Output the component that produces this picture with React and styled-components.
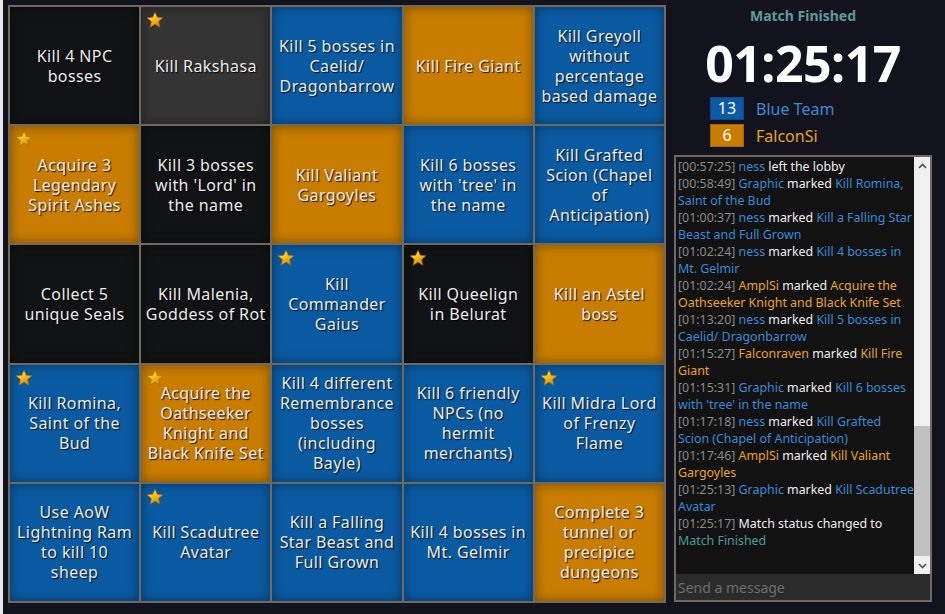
import React from "react";
import styled, { createGlobalStyle } from "styled-components";

const GlobalStyle = createGlobalStyle`
  html, body {
    margin: 0;
    padding: 0;
    background: #13131d;
  }
  body {
    border-left: 3px solid #e6e6ec;
    box-sizing: border-box;
    height: 614px;
    overflow: hidden;
    font-family: "Noto Sans", "Open Sans", sans-serif;
  }
`;

const Page = styled.div`
  display: flex;
  flex-direction: row;
  align-items: flex-start;
  gap: 8px;
  padding: 5px 0 0 5px;
`;

const Board = styled.div`
  display: grid;
  grid-template-columns: repeat(5, 1fr);
  grid-template-rows: repeat(5, 1fr);
  gap: 2px;
  width: 658px;
  height: 598px;
  box-sizing: border-box;
  border: 2px solid #6f695f;
  background: #6f695f;
`;

const colors = {
  black: "#101213",
  gray: "#343434",
  blue: "#0a5aa2",
  orange: "#c87d00",
};

const Cell = styled.div`
  position: relative;
  display: flex;
  align-items: center;
  justify-content: center;
  text-align: center;
  white-space: pre-line;
  padding: 0 4px;
  background: ${(p) => colors[p.$color]};
  box-shadow: inset 0 0 12px rgba(0, 0, 0, 0.4);
  color: #ececec;
  font-size: 16px;
  line-height: 20px;
  letter-spacing: 0.4px;
  text-shadow: 1px 1px 1px rgba(0, 0, 0, 0.9);
`;

const StarWrap = styled.div`
  position: absolute;
  top: 4px;
  left: 5px;
  width: 18px;
  height: 18px;
`;

const Star = () => (
  <StarWrap>
    <svg width="18" height="18" viewBox="0 0 24 24">
      <defs>
        <linearGradient id="sg" x1="0" y1="0" x2="0.6" y2="1">
          <stop offset="0" stopColor="#fff6b0" />
          <stop offset="0.45" stopColor="#ffc81e" />
          <stop offset="1" stopColor="#d98a00" />
        </linearGradient>
      </defs>
      <path
        d="M12 1.5l3.1 6.9 7.4.7-5.6 5 1.7 7.4L12 17.6l-6.6 3.9 1.7-7.4-5.6-5 7.4-.7z"
        fill="url(#sg)"
        stroke="#9a6200"
        strokeWidth="0.8"
        strokeLinejoin="round"
      />
    </svg>
  </StarWrap>
);

const Panel = styled.div`
  display: flex;
  flex-direction: column;
  width: 258px;
`;

const Status = styled.div`
  text-align: center;
  color: #5d9b9b;
  font-weight: bold;
  font-size: 14px;
  line-height: 20px;
  margin-top: 1px;
`;

const Timer = styled.div`
  text-align: center;
  color: #ffffff;
  font-weight: bold;
  font-size: 50px;
  line-height: 56px;
  margin-top: 9px;
  letter-spacing: -0.5px;
`;

const Teams = styled.div`
  display: flex;
  flex-direction: column;
  gap: 4px;
  padding-left: 36px;
  margin-top: 6px;
`;

const TeamRow = styled.div`
  display: flex;
  align-items: center;
  gap: 12px;
`;

const Score = styled.div`
  width: 34px;
  height: 23px;
  box-sizing: border-box;
  border: 1px solid ${(p) => (p.$team === "blue" ? "#0a4a88" : "#a56500")};
  background: ${(p) => (p.$team === "blue" ? "#0b5aa3" : "#c97d00")};
  color: #fff;
  font-size: 16px;
  line-height: 21px;
  text-align: center;
`;

const TeamName = styled.div`
  color: ${(p) => (p.$team === "blue" ? "#3a8ad6" : "#eba421")};
  font-size: 16px;
`;

const Chat = styled.div`
  margin-top: 8px;
  height: 447px;
  box-sizing: border-box;
  border: 2px solid #6f695f;
  display: flex;
  flex-direction: column;
  background: #121212;
`;

const LogArea = styled.div`
  flex: 1;
  display: flex;
  flex-direction: row;
  min-height: 0;
`;

const Log = styled.div`
  flex: 1;
  padding: 1px 0 0 2px;
  font-size: 12.4px;
  line-height: 17px;
  color: #f0f0f0;
`;

const Line = styled.div``;

const Time = styled.span`
  color: #8a8a8a;
`;

const Hl = styled.span`
  color: ${(p) =>
    p.$c === "blue" ? "#3a8ad6" : p.$c === "orange" ? "#eba421" : "#4a9d9d"};
`;

const Scrollbar = styled.div`
  width: 16px;
  background: #f0f0f0;
  display: flex;
  flex-direction: column;
  align-items: center;
`;

const Arrow = styled.div`
  height: 17px;
  display: flex;
  align-items: center;
  justify-content: center;
`;

const Track = styled.div`
  flex: 1;
  width: 100%;
  display: flex;
  flex-direction: column;
  justify-content: flex-end;
`;

const Thumb = styled.div`
  height: 130px;
  background: #c1c1c1;
  margin-bottom: 1px;
`;

const Input = styled.input`
  height: 26px;
  box-sizing: border-box;
  border: none;
  outline: none;
  background: #2b2b2b;
  color: #ddd;
  font-family: "Noto Sans", "Open Sans", sans-serif;
  font-size: 14px;
  padding: 0 2px;
  &::placeholder {
    color: #6e6e6e;
  }
`;

const cells = [
  ["Kill 4 NPC bosses", "black"],
  ["Kill Rakshasa", "gray", true],
  ["Kill 5 bosses in Caelid/ Dragonbarrow", "blue"],
  ["Kill Fire Giant", "orange"],
  ["Kill Greyoll without percentage based damage", "blue"],
  ["Acquire 3 Legendary Spirit Ashes", "orange", true],
  ["Kill 3 bosses with 'Lord' in the name", "black"],
  ["Kill Valiant Gargoyles", "orange"],
  ["Kill 6 bosses with 'tree' in the name", "blue"],
  ["Kill Grafted\nScion (Chapel\nof\nAnticipation)", "blue"],
  ["Collect 5 unique Seals", "black"],
  ["Kill Malenia, Goddess of Rot", "black"],
  ["Kill Commander Gaius", "blue", true],
  ["Kill Queelign\nin Belurat", "black", true],
  ["Kill an Astel boss", "orange"],
  ["Kill Romina, Saint of the Bud", "blue", true],
  ["Acquire the Oathseeker Knight and Black Knife Set", "orange", true],
  ["Kill 4 different Remembrance bosses (including Bayle)", "blue"],
  ["Kill 6 friendly NPCs (no hermit merchants)", "blue"],
  ["Kill Midra Lord of Frenzy Flame", "blue", true],
  ["Use AoW\nLightning Ram\nto kill 10\nsheep", "blue"],
  ["Kill Scadutree Avatar", "blue", true],
  ["Kill a Falling Star Beast and Full Grown", "blue"],
  ["Kill 4 bosses in Mt. Gelmir", "blue"],
  ["Complete 3 tunnel or precipice dungeons", "orange"],
];

const log = [
  ["00:57:25", "ness", "blue", "left the lobby", null],
  ["00:58:49", "Graphic", "blue", "marked", "Kill Romina, Saint of the Bud"],
  ["01:00:37", "ness", "blue", "marked", "Kill a Falling Star Beast and Full Grown"],
  ["01:02:24", "ness", "blue", "marked", "Kill 4 bosses in Mt. Gelmir"],
  ["01:02:24", "AmplSi", "orange", "marked", "Acquire the Oathseeker Knight and Black Knife Set"],
  ["01:13:20", "ness", "blue", "marked", "Kill 5 bosses in Caelid/ Dragonbarrow"],
  ["01:15:27", "Falconraven", "orange", "marked", "Kill Fire Giant"],
  ["01:15:31", "Graphic", "blue", "marked", "Kill 6 bosses with 'tree' in the name"],
  ["01:17:18", "ness", "blue", "marked", "Kill Grafted Scion (Chapel of Anticipation)"],
  ["01:17:46", "AmplSi", "orange", "marked", "Kill Valiant Gargoyles"],
  ["01:25:13", "Graphic", "blue", "marked", "Kill Scadutree Avatar"],
];

const App = () => {
  return (
    <>
      <GlobalStyle />
      <Page>
        <Board>
          {cells.map(([text, color, star], i) => (
            <Cell key={i} $color={color}>
              {star && <Star />}
              {text}
            </Cell>
          ))}
        </Board>
        <Panel>
          <Status>Match Finished</Status>
          <Timer>01:25:17</Timer>
          <Teams>
            <TeamRow>
              <Score $team="blue">13</Score>
              <TeamName $team="blue">Blue Team</TeamName>
            </TeamRow>
            <TeamRow>
              <Score $team="orange">6</Score>
              <TeamName $team="orange">FalconSi</TeamName>
            </TeamRow>
          </Teams>
          <Chat>
            <LogArea>
              <Log>
                {log.map(([t, who, c, verb, task], i) => (
                  <Line key={i}>
                    <Time>[{t}]</Time> <Hl $c={c}>{who}</Hl> {verb}
                    {task && (
                      <>
                        {" "}
                        <Hl $c={c}>{task}</Hl>
                      </>
                    )}
                  </Line>
                ))}
                <Line>
                  <Time>[01:25:17]</Time> Match status changed to{" "}
                  <Hl $c="teal">Match Finished</Hl>
                </Line>
              </Log>
              <Scrollbar>
                <Arrow>
                  <svg width="9" height="6" viewBox="0 0 9 6">
                    <path d="M1 5 L4.5 1.5 L8 5" fill="none" stroke="#505050" strokeWidth="1.6" />
                  </svg>
                </Arrow>
                <Track>
                  <Thumb />
                </Track>
                <Arrow>
                  <svg width="9" height="6" viewBox="0 0 9 6">
                    <path d="M1 1 L4.5 4.5 L8 1" fill="none" stroke="#505050" strokeWidth="1.6" />
                  </svg>
                </Arrow>
              </Scrollbar>
            </LogArea>
            <Input placeholder="Send a message" />
          </Chat>
        </Panel>
      </Page>
    </>
  );
};

export default App;
